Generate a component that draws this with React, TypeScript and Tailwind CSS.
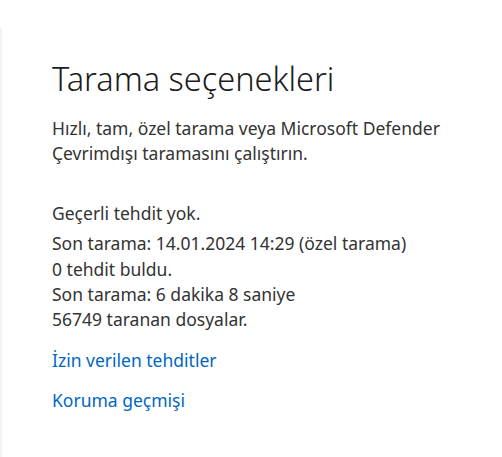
export default function App() {
  return (
    <div className="flex min-h-[457px] w-[502px] bg-white" style={{ fontFamily: '"Noto Sans", "Open Sans", sans-serif' }}>
      <div className="mt-[28px] w-[2px] shrink-0 bg-[#f3f3f3]" />
      <div className="flex flex-col pl-[50px] pt-[57px]">
        <h1 className="text-[32.5px] font-light leading-[44px] text-[#1b1b1b]">Tarama seçenekleri</h1>
        <p className="mt-[15px] text-[17.5px] leading-[25px] text-[#333333]">
          Hızlı, tam, özel tarama veya Microsoft Defender
          <br />
          Çevrimdışı taramasını çalıştırın.
        </p>
        <div className="mt-[35px] text-[17.5px] leading-[25.3px] text-[#333333]">
          <p>Geçerli tehdit yok.</p>
          <p className="mt-[5px]">Son tarama: 14.01.2024 14:29 (özel tarama)</p>
          <p>0 tehdit buldu.</p>
          <p>Son tarama: 6 dakika 8 saniye</p>
          <p>56749 taranan dosyalar.</p>
        </div>
        <a className="mt-[16px] text-[17.5px] leading-[25px] text-[#0067c0]">İzin verilen tehditler</a>
        <a className="mt-[15px] text-[17.5px] leading-[25px] text-[#0067c0]">Koruma geçmişi</a>
      </div>
    </div>
  );
}
